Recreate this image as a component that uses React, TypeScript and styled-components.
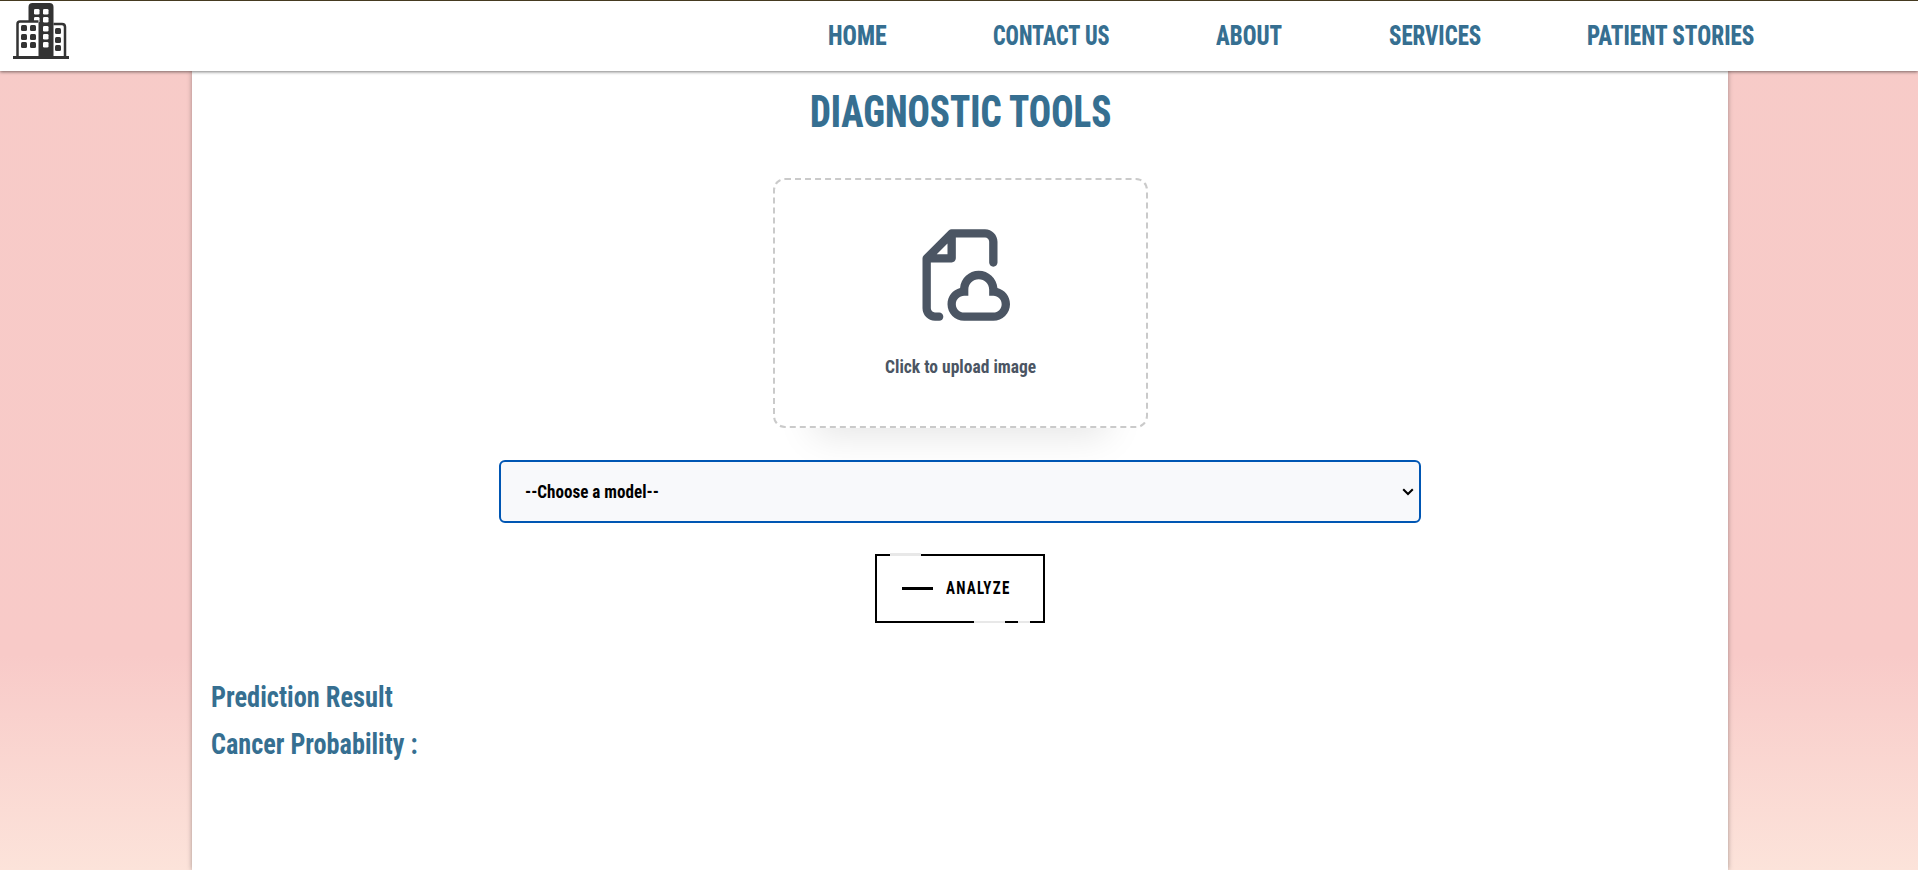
import React, { useLayoutEffect, useRef, useState } from "react";
import styled, { createGlobalStyle } from "styled-components";

const GlobalStyle = createGlobalStyle`
  * { box-sizing: border-box; }
  html, body { margin: 0; padding: 0; }
  body {
    font-family: Roboto, "Liberation Sans", sans-serif;
    font-weight: 700;
    font-stretch: 75%;
    overflow: hidden;
  }
  h1, h2, p { margin: 0; font-weight: inherit; }
`;

const Page = styled.div`
  display: flex;
  flex-direction: column;
  height: 870px;
  background: linear-gradient(180deg, #f7cbc8 0, #f8cac8 655px, #fce3da 870px);
`;

const Header = styled.header`
  position: relative;
  z-index: 1;
  display: flex;
  align-items: flex-start;
  justify-content: space-between;
  flex: none;
  height: 71px;
  padding: 0 164px 0 13px;
  border-top: 1px solid #453a20;
  background: #fff;
  box-shadow: 0 1px 3px rgba(0, 0, 0, 0.5);
`;

const Logo = styled.svg`
  display: block;
  width: 56px;
  height: 56px;
  margin-top: 2px;
`;

const Nav = styled.nav`
  display: flex;
  gap: 106.3px;
  padding-top: 19px;
`;

const NavLink = styled.a`
  color: #366f91;
  font-size: 27px;
  font-weight: 800;
  line-height: 32px;
  text-decoration: none;
`;

const Card = styled.main`
  display: flex;
  flex-direction: column;
  flex: 1;
  width: 1536px;
  margin-left: 192px;
  padding: 16px 19px 0;
  background: #fff;
  box-shadow: 0 0 5px rgba(0, 0, 0, 0.35);
`;

const Title = styled.h1`
  align-self: center;
  color: #366f91;
  font-size: 43.5px;
  font-weight: 800;
  line-height: 52px;
`;

const UploadBox = styled.label`
  display: flex;
  flex-direction: column;
  align-items: center;
  align-self: center;
  width: 375px;
  height: 250px;
  margin-top: 39px;
  padding-top: 45px;
  border: 2px dashed #cacaca;
  border-radius: 12px;
  background: #fff;
  box-shadow: 0 48px 35px -40px rgba(0, 0, 0, 0.1);
  color: #4b5563;
  font-size: 19px;
  line-height: 22px;
`;

const UploadIcon = styled.svg`
  width: 100px;
  height: 100px;
  margin-bottom: 31px;
`;

const ModelSelect = styled.div`
  position: relative;
  display: flex;
  align-items: center;
  justify-content: space-between;
  align-self: center;
  width: 922px;
  height: 63px;
  margin-top: 32px;
  padding: 0 5px 0 24px;
  border: 2px solid #0056b3;
  border-radius: 6px;
  background: #f8f9fb;
  color: #000;
  font-size: 19px;
  line-height: 22px;
`;

const Chevron = styled.svg`
  width: 12px;
  height: 8px;
`;

const AnalyzeButton = styled.button`
  position: relative;
  display: flex;
  align-items: center;
  gap: 13px;
  align-self: center;
  width: 170px;
  height: 69px;
  margin-top: 31px;
  padding: 0 0 1px 25px;
  border: 2px solid #000;
  background: #fff;
  color: #000;
  font: inherit;
  font-size: 18.5px;
  line-height: 22px;
`;

const Dash = styled.span`
  width: 31px;
  height: 3px;
  background: #000;
`;

const EdgeKey = styled.span<{ $x: number; $width: number; $bottom?: boolean }>`
  position: absolute;
  left: ${(p) => p.$x}px;
  width: ${(p) => p.$width}px;
  ${(p) => (p.$bottom ? "bottom: -2px; height: 2px;" : "top: -3px; height: 3px;")}
  background: #e8e8e8;
`;

const Results = styled.section`
  display: flex;
  flex-direction: column;
  align-items: flex-start;
  margin-top: 50px;
  color: #366f91;
  font-size: 30px;
  line-height: 47px;
`;

const ResultLine = styled.h2`
  font-size: inherit;
`;

const FitBox = styled.span<{ $width: number }>`
  display: block;
  width: ${(p) => p.$width}px;
  white-space: nowrap;
`;

const FitText = styled.span<{ $spacing: number }>`
  display: inline-block;
  transform-origin: left center;
  letter-spacing: ${(p) => p.$spacing}px;
`;

/* Condenses a line of text horizontally to the given width. */
function Condensed({ width, spacing = 0, children }: { width: number; spacing?: number; children: string }) {
  const ref = useRef<HTMLSpanElement>(null);
  const [scale, setScale] = useState(1);
  useLayoutEffect(() => {
    if (ref.current) setScale(width / (ref.current.offsetWidth - spacing));
  }, [width, spacing, children]);
  return (
    <FitBox $width={width}>
      <FitText ref={ref} $spacing={spacing} style={{ transform: `scaleX(${scale})` }}>
        {children}
      </FitText>
    </FitBox>
  );
}

const links = [
  { label: "HOME", width: 59 },
  { label: "CONTACT US", width: 117 },
  { label: "ABOUT", width: 66 },
  { label: "SERVICES", width: 92 },
  { label: "PATIENT STORIES", width: 167 },
];

const darkWindows = [
  [8, 22], [17, 22], [8, 31], [17, 31], [8, 39], [17, 39],
  [42, 25], [42, 34], [42, 42],
];
const lightWindows = [[21, 6], [30, 6], [21, 14], [30, 14], [30, 23], [30, 31], [30, 39]];

export default function App() {
  return (
    <>
      <GlobalStyle />
      <Page>
        <Header>
          <Logo viewBox="0 0 56 56">
            <path d="M15.500 54V4q0-4 4-4h17q4 0 4 4v50z" fill="#333" />
            {lightWindows.map(([x, y]) => (
              <rect key={`${x}-${y}`} x={x} y={y} width="5.500" height="5.500" rx="1.300" fill="#fff" />
            ))}
            <path d="M4.500 54V21q0-2.500 2.500-2.500h18.500V54z" fill="#fff" />
            <path d="M4.500 54V21q0-2.500 2.500-2.500h18.500" fill="none" stroke="#333" strokeWidth="2.500" />
            <path d="M40.500 21H49q3 0 3 3v30" fill="none" stroke="#333" strokeWidth="2.500" />
            {darkWindows.map(([x, y]) => (
              <rect key={`${x}-${y}`} x={x} y={y} width="6" height="6" rx="1.500" fill="#333" />
            ))}
            <path d="M0 53h56v3H0z" fill="#333" />
          </Logo>
          <Nav>
            {links.map((link) => (
              <NavLink key={link.label}>
                <Condensed width={link.width}>{link.label}</Condensed>
              </NavLink>
            ))}
          </Nav>
        </Header>
        <Card>
          <Title>
            <Condensed width={301}>DIAGNOSTIC TOOLS</Condensed>
          </Title>
          <UploadBox>
            <UploadIcon viewBox="0 0 24 24" fill="#4b5563">
              <path
                fillRule="evenodd"
                clipRule="evenodd"
                d="M10 1C9.73478 1 9.48043 1.10536 9.29289 1.29289L3.29289 7.29289C3.10536 7.48043 3 7.73478 3 8V20C3 21.6569 4.34315 23 6 23H7C7.55228 23 8 22.5523 8 22C8 21.4477 7.55228 21 7 21H6C5.44772 21 5 20.5523 5 20V9H10C10.5523 9 11 8.55228 11 8V3H18C18.5523 3 19 3.44772 19 4V9C19 9.55228 19.4477 10 20 10C20.5523 10 21 9.55228 21 9V4C21 2.34315 19.6569 1 18 1H10ZM9 7H6.41421L9 4.41421V7ZM14 15.5C14 14.1193 15.1193 13 16.5 13C17.8807 13 19 14.1193 19 15.5V16V17H20C21.1046 17 22 17.8954 22 19C22 20.1046 21.1046 21 20 21H13C11.8954 21 11 20.1046 11 19C11 17.8954 11.8954 17 13 17H14V16V15.5ZM16.5 11C14.142 11 12.2076 12.8136 12.0156 15.122C10.2825 15.5606 9 17.1305 9 19C9 21.2091 10.7909 23 13 23H20C22.2091 23 24 21.2091 24 19C24 17.1305 22.7175 15.5606 20.9844 15.122C20.7924 12.8136 18.858 11 16.5 11Z"
              />
            </UploadIcon>
            <Condensed width={151}>Click to upload image</Condensed>
          </UploadBox>
          <ModelSelect>
            <Condensed width={134}>--Choose a model--</Condensed>
            <Chevron viewBox="0 0 12 8">
              <path d="M1.200 1.200L6 6l4.800-4.800" fill="none" stroke="#000" strokeWidth="2" />
            </Chevron>
          </ModelSelect>
          <AnalyzeButton>
            <EdgeKey $x={13} $width={31} />
            <EdgeKey $x={97} $width={31} $bottom />
            <EdgeKey $x={141} $width={12} $bottom />
            <Dash />
            <Condensed width={63} spacing={1.5}>ANALYZE</Condensed>
          </AnalyzeButton>
          <Results>
            <ResultLine>
              <Condensed width={182}>Prediction Result</Condensed>
            </ResultLine>
            <ResultLine>
              <Condensed width={207}>Cancer Probability :</Condensed>
            </ResultLine>
          </Results>
        </Card>
      </Page>
    </>
  );
}
